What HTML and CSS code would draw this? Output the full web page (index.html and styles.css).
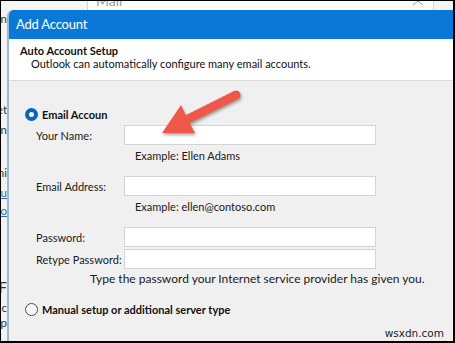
FILE: index.html
```html
<!DOCTYPE html>
<html>
<head>
<meta charset="utf-8">
<link rel="stylesheet" href="styles.css">
</head>
<body>
<div class="frame">
  <div class="topbar">
    <div class="tb-left"></div>
    <div class="tb-main"><span class="mail">Mail</span></div>
    <div class="tb-ctrl">
      <svg width="12" height="6" viewBox="0 0 12 6"><polyline points="1,5 6,1 11,5" fill="none" stroke="#9a9a9a" stroke-width="1"/></svg>
    </div>
    <div class="tb-right"></div>
  </div>
  <div class="main">
    <div class="side">
      <div class="frag f1">n</div>
      <div class="frag f2">Set</div>
      <div class="frag f3">in</div>
      <div class="frag f4">Uni</div>
      <div class="frag f5 link">you</div>
      <div class="frag f6 link">to</div>
      <div class="frag f7 big">F</div>
      <div class="frag f8">pic</div>
      <div class="frag f9">up</div>
    </div>
    <div class="dialog">
      <div class="titlebar">Add Account</div>
      <div class="header">
        <div class="h-title">Auto Account Setup</div>
        <div class="h-sub">Outlook can automatically configure many email accounts.</div>
      </div>
      <div class="body">
        <div class="radio-row first">
          <span class="radio checked"></span>
          <span class="radio-label">Email Accoun</span>
        </div>
        <div class="field f-name">
          <span class="label">Your Name:</span>
          <span class="input"></span>
        </div>
        <div class="hint">Example: Ellen Adams</div>
        <div class="field f-email">
          <span class="label">Email Address:</span>
          <span class="input"></span>
        </div>
        <div class="hint">Example: ellen@contoso.com</div>
        <div class="field f-pass">
          <span class="label">Password:</span>
          <span class="input"></span>
        </div>
        <div class="field f-retype">
          <span class="label">Retype Password:</span>
          <span class="input"></span>
        </div>
        <div class="note">Type the password your Internet service provider has given you.</div>
        <div class="radio-row manual">
          <span class="radio"></span>
          <span class="radio-label">Manual setup or additional server type</span>
        </div>
      </div>
    </div>
  </div>
  <div class="watermark">wsxdn.com</div>
</div>
<svg class="arrow" width="455" height="343" viewBox="0 0 455 343">
  <g class="arrow-shape">
    <line x1="236" y1="95" x2="186" y2="120" stroke="#f0574b" stroke-width="9" stroke-linecap="round"/>
    <polygon points="162,133 181,105 188,120 195,133" fill="#f0574b"/>
  </g>
</svg>
</body>
</html>
```
FILE: styles.css
```css
html, body {
  margin: 0;
  padding: 0;
}
body {
  width: 455px;
  height: 343px;
  overflow: hidden;
  position: relative;
  background: #000;
  font-family: "Lato", "Noto Sans", sans-serif;
}
.frame {
  box-sizing: border-box;
  width: 455px;
  height: 343px;
  border-style: solid;
  border-color: #000;
  border-width: 1px 2px 2px 1px;
  background: #f3f3f3;
  display: flex;
  flex-direction: column;
  overflow: hidden;
  position: relative;
}
.topbar {
  height: 9px;
  display: flex;
  flex-shrink: 0;
  background: #fff;
}
.tb-left {
  width: 86px;
  background: #f6f6f6;
  border-right: 1px solid #d2d2d2;
}
.tb-main {
  width: 324px;
  overflow: hidden;
}
.mail {
  display: block;
  margin-left: 8px;
  margin-top: -8px;
  font-size: 14px;
  line-height: 16px;
  color: #9a9a9a;
}
.tb-ctrl {
  width: 21px;
  border-right: 1px solid #d6d6d6;
  display: flex;
  align-items: flex-start;
}
.tb-ctrl svg {
  margin-top: -1px;
}
.tb-right {
  flex: 1;
  background: #f4f4f4;
}
.main {
  flex: 1;
  display: flex;
  min-height: 0;
}
.side {
  width: 6px;
  flex-shrink: 0;
  overflow: hidden;
  background: #f2f2f2;
  font-size: 11.5px;
  color: #333;
}
.frag {
  display: flex;
  justify-content: flex-end;
  white-space: nowrap;
  height: 14px;
  line-height: 14px;
}
.frag.link {
  color: #2b6cb8;
  text-decoration: underline;
}
.frag.big {
  font-size: 15px;
}
.f1 { margin-top: 2px; }
.f2 { margin-top: 77px; }
.f3 { margin-top: 6px; }
.f4 { margin-top: 29px; }
.f5 { margin-top: 6px; }
.f6 { margin-top: 4px; }
.f7 { margin-top: 62px; }
.f8 { margin-top: 7px; }
.f9 { margin-top: 1px; }
.dialog {
  flex: 1;
  display: flex;
  flex-direction: column;
  border-left: 2px solid #9db8d4;
  border-top-left-radius: 6px;
  overflow: hidden;
  background: #f0f0f0;
}
.titlebar {
  height: 29px;
  flex-shrink: 0;
  background: #0a78d6;
  color: #fff;
  font-size: 13px;
  line-height: 29px;
  padding-left: 7px;
  letter-spacing: -0.2px;
}
.header {
  height: 42px;
  flex-shrink: 0;
  background: #fff;
  border-bottom: 1px solid #dcdcdc;
  box-sizing: border-box;
  padding-top: 5px;
  font-size: 11px;
  color: #111;
}
.h-title {
  font-weight: bold;
  line-height: 13px;
  padding-left: 11px;
}
.h-sub {
  line-height: 13px;
  padding-left: 22px;
}
.body {
  flex: 1;
  font-size: 11px;
  color: #1a1a1a;
  padding-left: 16px;
}
.radio-row {
  display: flex;
  align-items: center;
  height: 14px;
}
.radio-row.first {
  margin-top: 26px;
}
.radio-row.manual {
  margin-top: 16px;
}
.radio {
  box-sizing: border-box;
  width: 13px;
  height: 13px;
  border-radius: 50%;
  border: 1px solid #4a4a4a;
  background: #f8f8f8;
  flex-shrink: 0;
}
.radio.checked {
  border: 4px solid #0a63bd;
  background: #fff;
}
.radio-label {
  font-weight: bold;
  margin-left: 4px;
  color: #111;
  white-space: nowrap;
}
.field {
  display: flex;
  align-items: center;
  height: 20px;
}
.label {
  box-sizing: border-box;
  width: 99px;
  padding-left: 11px;
  flex-shrink: 0;
  white-space: nowrap;
}
.input {
  box-sizing: border-box;
  width: 252px;
  height: 20px;
  background: #fff;
  border: 1px solid #d4d4d4;
  flex-shrink: 0;
}
.f-name { margin-top: 4px; }
.f-email { margin-top: 13px; }
.f-pass { margin-top: 13px; }
.f-retype { margin-top: 2px; }
.hint {
  margin-top: 4px;
  line-height: 14px;
  padding-left: 110px;
  white-space: nowrap;
}
.note {
  margin-top: 3px;
  line-height: 14px;
  padding-left: 65px;
  white-space: nowrap;
  font-size: 12px;
}
.watermark {
  position: absolute;
  right: 9px;
  bottom: 1px;
  font-family: "DejaVu Sans", sans-serif;
  font-size: 10.5px;
  line-height: 14px;
  color: #222;
}
.arrow {
  position: absolute;
  left: 0;
  top: 0;
  pointer-events: none;
}
.arrow-shape {
  filter: drop-shadow(1px 2px 1.5px rgba(0, 0, 0, 0.35));
}
```
